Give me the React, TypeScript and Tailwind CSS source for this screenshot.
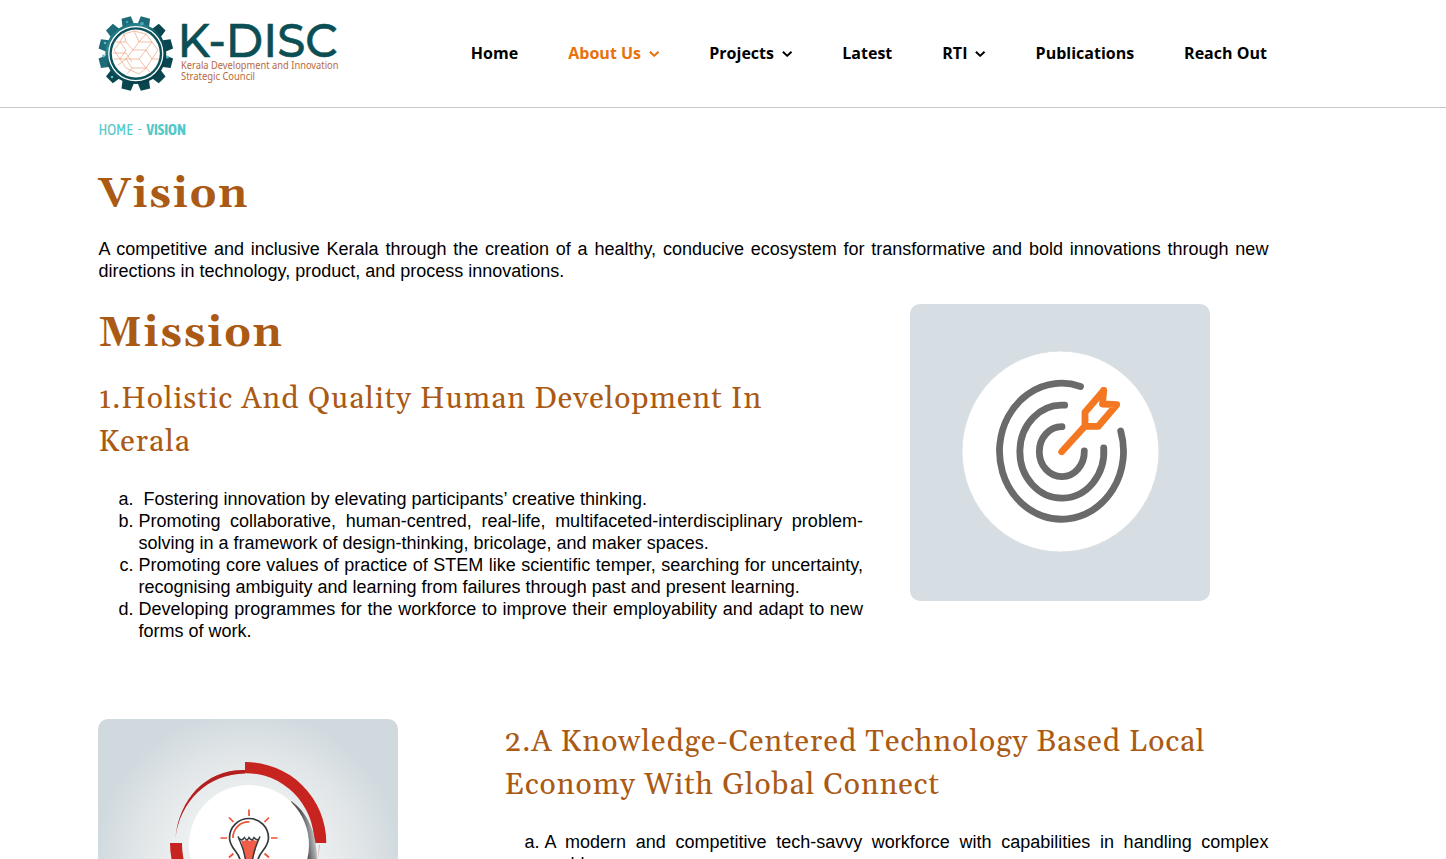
import { ReactNode } from "react";

const teeth = Array.from({ length: 12 }, (_, i) => i * 30 + 15);

function Logo() {
  return (
    <svg className="h-[80px] w-[244px] overflow-visible" viewBox="97 13 244 80" role="img" aria-label="K-DISC">
      <defs>
        <linearGradient id="gear" x1="0" y1="0" x2="0.7" y2="1">
          <stop offset="0" stopColor="#0d5f68" />
          <stop offset="0.3" stopColor="#2b8790" />
          <stop offset="0.5" stopColor="#0c5560" />
          <stop offset="1" stopColor="#063d45" />
        </linearGradient>
      </defs>
      {teeth.map((a) => (
        <path key={a} d="M129.700 26 L131 16.300 H140.600 L141.900 26Z" fill={a > 30 && a < 230 ? "#09464f" : "#1c6b76"} transform={`rotate(${a} 135.8 53.600)`} />
      ))}
      <circle cx="135.800" cy="53.600" r="30.500" fill="url(#gear)" />
      <g fill="#5fbcd0">
        <circle cx="103.500" cy="56" r="1.400" />
        <circle cx="105" cy="43" r="1.300" />
        <circle cx="167.500" cy="57" r="1.500" />
        <circle cx="142" cy="23.500" r="1.800" opacity=".7" />
        <circle cx="127" cy="22" r="1.300" opacity=".7" />
        <circle cx="112" cy="77" r="1.300" />
      </g>
      <circle cx="135.800" cy="53.600" r="27" fill="#0c525b" stroke="#fff" strokeWidth="1.300" />
      <circle cx="135.800" cy="53.600" r="24" fill="#fff" />
      <g fill="none" stroke="#e9a583" strokeWidth="0.700">
        <path d="M124 34 L134 31 L146 34 L152 42 L146 50 H133 L126 42Z M126 42 H114 M133 50 L126 59 H114 M126 59 L132 68 H146 L152 59 L146 50 M152 59 H159 M132 68 L127 74 M146 68 L151 73 M139 42 L133 50 M139 42 H152 M139 42 L134 31 M139 59 H126 M139 59 L146 68 M139 59 L146 50 M114 50 L120 42 L126 50 L120 59Z M118 65 L126 59 M113 53 H126 L132 62 M146 34 L139 42" />
        <path d="M152 42 L158 50 L152 59 M120 42 L124 34 M120 59 L126 68 L139 74 L146 68" />
      </g>
      <text x="177.500" y="57.200" textLength="160" lengthAdjust="spacingAndGlyphs" fontSize="46.500" fontWeight="500" fill="#0b4f55" stroke="#0b4f55" strokeWidth="0.600" style={{ fontFamily: "Montserrat, Lato, sans-serif" }}>K-DISC</text>
      <g fill="#b8683a" fontSize="11" style={{ fontFamily: '"Noto Sans", sans-serif' }}>
        <text x="181" y="69" textLength="157.500" lengthAdjust="spacingAndGlyphs">Kerala Development and Innovation</text>
        <text x="181" y="80" textLength="74" lengthAdjust="spacingAndGlyphs">Strategic Council</text>
      </g>
    </svg>
  );
}

function NavItem({ children, active = false, menu = false, className = "" }: { children: ReactNode; active?: boolean; menu?: boolean; className?: string }) {
  return (
    <a href="#" className={`flex items-center whitespace-nowrap ${active ? "text-[#e8710a]" : "text-black"} ${className}`}>
      {children}
      {menu && (
        <svg className="mt-[2px] ml-[8px] h-[10px] w-[11px]" viewBox="0 0 11 10" fill="none" stroke="currentColor" strokeWidth="2" strokeLinejoin="round">
          <path d="M0.900 2.700 L5.200 6.900 L9.500 2.700" />
        </svg>
      )}
    </a>
  );
}

function TargetPicture() {
  return (
    <svg className="h-[297px] w-[300px] rounded-[10px] bg-[#d6dde3]" viewBox="0 0 300 297" fill="none" strokeLinecap="round" strokeLinejoin="round">
      <ellipse cx="150.500" cy="147.500" rx="98.500" ry="100.500" fill="#fff" stroke="#d9e1e3" strokeWidth="1" />
      <g stroke="#6a6a6a" strokeWidth="6.800">
        <path d="M170.500 82.500 A62 68 0 1 0 210.700 127" />
        <path d="M154.700 101.200 A42 46.500 0 1 0 193.700 143.800" />
        <path d="M152 122.600 A22.500 25 0 1 0 174.300 147" />
      </g>
      <path d="M151.700 147.700 L175 122 V108.300 L193.700 86.500" stroke="#f47721" strokeWidth="6.800" />
      <path d="M193.700 86.500 L192.500 100 L206.700 100.700 L188.300 122.300 H175" stroke="#f47721" strokeWidth="6.800" />
    </svg>
  );
}

function BulbPicture() {
  return (
    <svg className="h-[300px] w-[300px] rounded-[10px]" viewBox="0 0 300 300" fill="none">
      <defs>
        <radialGradient id="backdrop" gradientUnits="userSpaceOnUse" cx="150" cy="145" r="155">
          <stop offset="0" stopColor="#f4f5f6" />
          <stop offset="0.450" stopColor="#eceff0" />
          <stop offset="0.750" stopColor="#dfe4e6" />
          <stop offset="1" stopColor="#cfd9de" />
        </radialGradient>
        <linearGradient id="shade" gradientUnits="userSpaceOnUse" x1="207" y1="120" x2="220" y2="118">
          <stop offset="0" stopColor="#555" />
          <stop offset="0.400" stopColor="#8d8f90" />
          <stop offset="1" stopColor="#e0e3e5" />
        </linearGradient>
      </defs>
      <rect width="300" height="300" fill="url(#backdrop)" />
      <path d="M147 43 A80.500 81 0 0 1 228.300 124 H216.300 A67.500 70 0 0 0 147 54.300Z" fill="#c7241f" />
      <path d="M147 51 V54.500 C110 55 82 82 77.500 119 C81 80 108 50 147 51Z" fill="#b51e1d" />
      <path d="M72 124 H84 A67 69 0 0 0 150 194 V206 A79 82 0 0 1 72 124Z" fill="#c7241f" />
      <path d="M222 126 Q221 134 219 145 Q220.500 134 221 126Z" fill="#c7241f" opacity=".35" />
      <path d="M193 82 C209 93 219.500 113 219 145 L204 164Z" fill="url(#shade)" />
      <circle cx="151" cy="126" r="60" fill="#fff" />
      <g stroke="#ef5136" strokeWidth="1.700">
        <path d="M151 90.500 V97 M131 98.500 L135.500 103 M171 98.500 L166.500 103 M122.500 119 H129 M173 119 H179.500 M131 138.500 L135.500 134.500 M171 138.500 L166.500 134.500" />
        <path d="M135 119 A15.500 15.500 0 0 1 151.500 103" />
      </g>
      <path d="M143 145 C142 132 132 131 131.500 119 A19.500 19.500 0 0 1 170.500 119 C170 131 160 132 159 145" stroke="#333a3d" strokeWidth="1.700" />
      <path d="M143 121 Q147 123 149 120 Q152 124 154 120 Q158 123 160 121 L154 145 H148Z" fill="#f05d48" />
      <path d="M148 145 C147 131 143 125 140 117.500 Q143 123.500 146.500 118.500 Q149 123 151 118.500 Q154 123 156 118.500 Q160 123.500 162 117.500 C159 125 155 131 154 145" stroke="#333a3d" strokeWidth="1.400" />
    </svg>
  );
}

const h1 = "font-[Gelasio,'Liberation_Serif',serif] text-[42px] leading-[56px] font-bold tracking-[2px] text-[#aa5a14]";
const h2 = "font-[Gelasio,'Liberation_Serif',serif] text-[30px] leading-[43px] tracking-[1px] text-[#aa5a14]";
const list = "list-[lower-alpha] pl-[40px] text-justify mt-[24px]";

export default function App() {
  return (
    <div className="h-[859px] overflow-hidden bg-white font-['Liberation_Sans',Arial,sans-serif] text-[18px] leading-[22px] text-black">
      <header className="flex h-[108px] items-center border-b border-[#c8c8c8] pb-px pl-[97px]">
        <Logo />
        <nav className="ml-[129.800px] flex font-['Open_Sans',sans-serif] text-[16px] leading-[24px] font-bold">
          <NavItem className="w-[97.500px]">Home</NavItem>
          <NavItem active menu className="w-[141px]">About Us</NavItem>
          <NavItem menu className="w-[133px]">Projects</NavItem>
          <NavItem className="w-[100px]">Latest</NavItem>
          <NavItem menu className="w-[93.300px]">RTI</NavItem>
          <NavItem className="w-[148.500px]">Publications</NavItem>
          <NavItem>Reach Out</NavItem>
        </nav>
      </header>
      <main className="ml-[98.400px] w-[1170px]">
        <div className="flex h-[59px] gap-[5px] pt-[11px] font-['Asap_Condensed','Open_Sans',sans-serif] text-[15.200px] text-[#55c8ca]">
          <span>HOME</span>
          <span className="-mt-px">-</span>
          <b>VISION</b>
        </div>
        <h1 className={h1}>Vision</h1>
        <p className="mt-[15px] text-justify">
          A competitive and inclusive Kerala through the creation of a healthy, conducive ecosystem for transformative and bold innovations through new directions in technology, product, and process innovations.
        </p>
        <section className="mt-[22px] flex h-[415px]">
          <div className="w-[764.500px] pt-[2px]">
            <h1 className={h1}>Mission</h1>
            <h2 className={`${h2} mt-[16px]`}>1.Holistic And Quality Human Development In<br />Kerala</h2>
            <ol className={list}>
              <li>&nbsp;Fostering innovation by elevating participants’ creative thinking.</li>
              <li>Promoting collaborative, human-centred, real-life, multifaceted-interdisciplinary problem-solving in a framework of design-thinking, bricolage, and maker spaces.</li>
              <li>Promoting core values of practice of STEM like scientific temper, searching for uncertainty, recognising ambiguity and learning from failures through past and present learning.</li>
              <li>Developing programmes for the workforce to improve their employability and adapt to new forms of work.</li>
            </ol>
          </div>
          <div className="ml-[47px]"><TargetPicture /></div>
        </section>
        <section className="flex">
          <div className="w-[406px] shrink-0"><BulbPicture /></div>
          <div className="w-[764px] pt-[2px]">
            <h2 className={h2}>2.A Knowledge-Centered Technology Based Local Economy With Global Connect</h2>
            <ol className={list}>
              <li>A modern and competitive tech-savvy workforce with capabilities in handling complex problems.</li>
            </ol>
          </div>
        </section>
      </main>
    </div>
  );
}
